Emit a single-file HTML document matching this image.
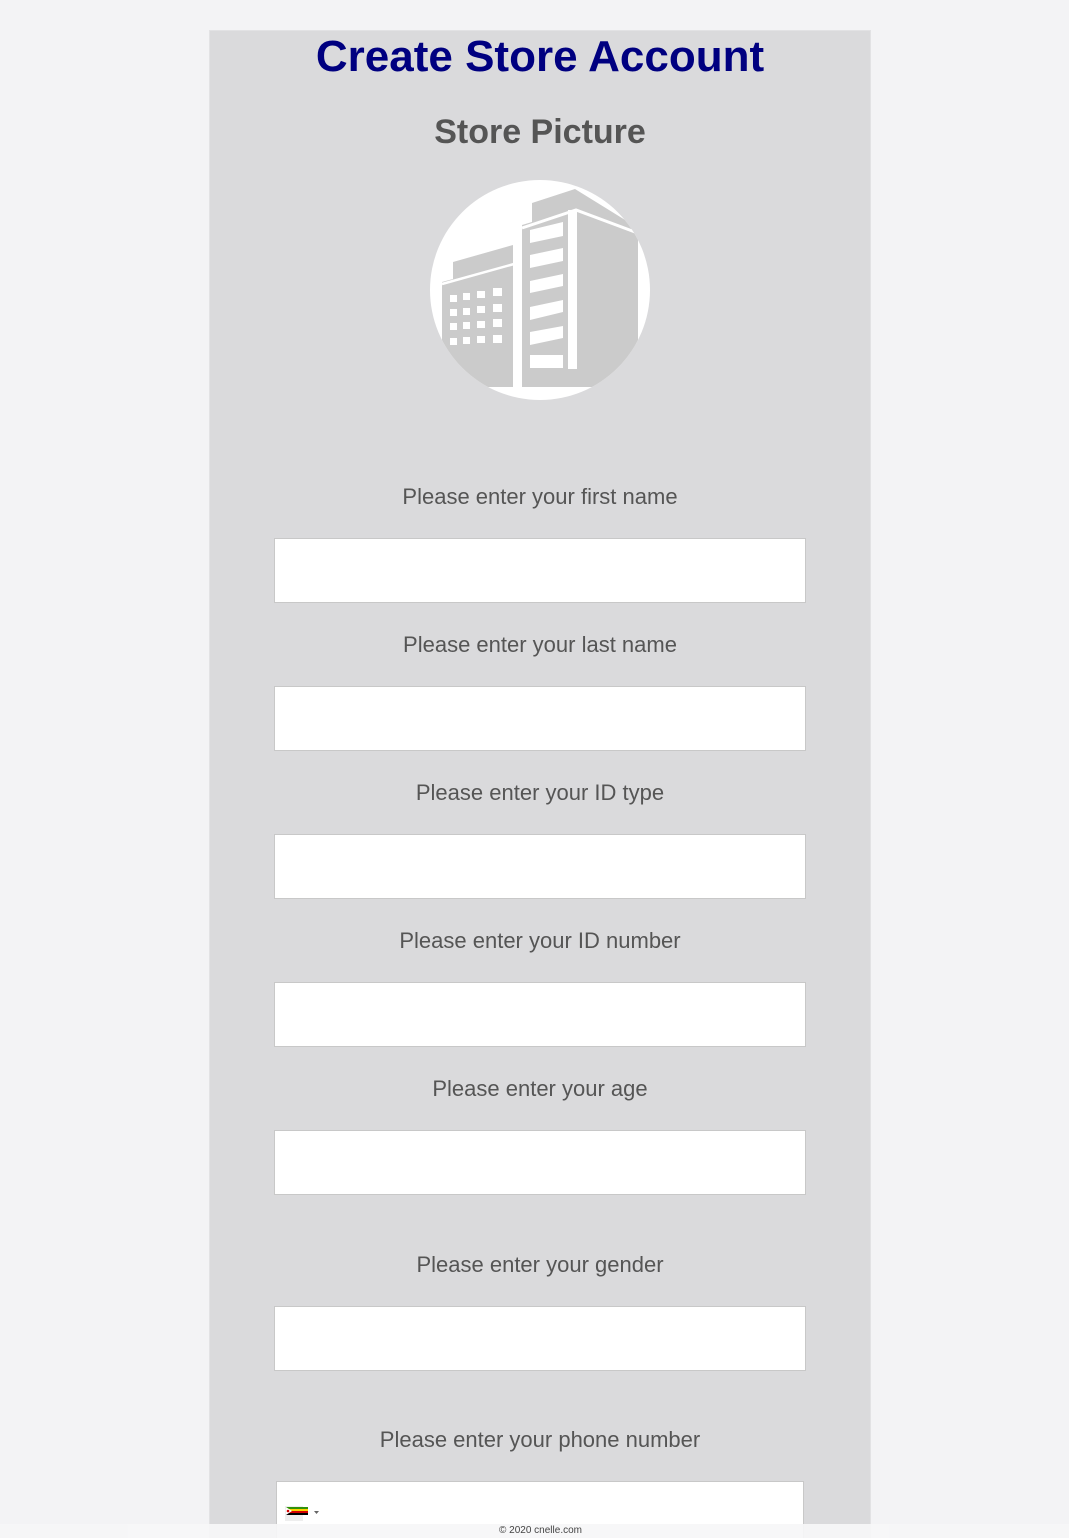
<!DOCTYPE html>
<html style="overflow:hidden;height:1538px"><head><style>
body{margin:0;background:#f3f3f5;width:1069px;height:1538px;overflow:hidden;font-family:"Liberation Sans",sans-serif;position:relative}
.panel{position:absolute;left:209px;top:30px;width:662px;height:1508px;background:#dadadc;border:1px solid #e2e2e4;border-bottom:none;box-sizing:border-box}
.t{position:absolute;left:209px;width:662px;text-align:center}
h1{margin:0;font-size:44px;color:#000080;font-weight:bold}
.lbl{font-size:22px;color:#555}
.in{position:absolute;left:274px;width:532px;height:65px;background:#fff;border:1px solid #c8c8c8;box-sizing:border-box}
.foot{position:absolute;left:0;top:1524px;width:1069px;height:14px;background:rgba(246,246,247,.93);font-size:10px;color:#444;text-align:center;line-height:13px}
.foot span{position:relative;left:6px}
</style></head><body>
<div class="panel"></div>
<div class="t" style="top:32px"><h1>Create Store Account</h1></div>
<div class="t" style="top:113px;font-size:34px;font-weight:bold;color:#555">Store Picture</div>
<svg style="position:absolute;left:430px;top:180px" width="220" height="222" viewBox="0 0 220 222">
<defs><clipPath id="c"><circle cx="110" cy="110" r="110"/></clipPath></defs>
<circle cx="110" cy="110" r="110" fill="#fff"/>
<g clip-path="url(#c)">
<polygon fill="#cbcbcb" points="12,102 23,99 23,82 83,65 83,207 12,207"/>
<polygon fill="#cbcbcb" points="92,45 102,42 102,23 145,9 200,43 208,48 208,207 92,207"/>
<polyline fill="none" stroke="#fff" stroke-width="2.5" points="12,104 84,84"/>
<polyline fill="none" stroke="#fff" stroke-width="3" points="92,48 146,30 205,52"/>
<rect x="138" y="30" width="9" height="159" fill="#fff"/>
<g fill="#fff">
<polygon points="100,50 133,42 133,56 100,63"/>
<polygon points="100,75 133,68 133,81 100,88"/>
<polygon points="100,101 133,94 133,106 100,113"/>
<polygon points="100,127 133,120 133,132 100,140"/>
<polygon points="100,152 133,146 133,158 100,165"/>
<rect x="100" y="175" width="33" height="13"/>
<rect x="20" y="115" width="7" height="7"/><rect x="33" y="113" width="7" height="7"/><rect x="47" y="111" width="8" height="7"/><rect x="63" y="108" width="9" height="8"/>
<rect x="20" y="129" width="7" height="7"/><rect x="33" y="128" width="7" height="7"/><rect x="47" y="126" width="8" height="7"/><rect x="63" y="124" width="9" height="8"/>
<rect x="20" y="143" width="7" height="7"/><rect x="33" y="142" width="7" height="7"/><rect x="47" y="141" width="8" height="7"/><rect x="63" y="139" width="9" height="8"/>
<rect x="20" y="158" width="7" height="7"/><rect x="33" y="157" width="7" height="7"/><rect x="47" y="156" width="8" height="7"/><rect x="63" y="155" width="9" height="8"/>
</g>
</g>
</svg>
<div class="t lbl" style="top:484px">Please enter your first name</div><div class="in" style="top:538px"></div>
<div class="t lbl" style="top:632px">Please enter your last name</div><div class="in" style="top:686px"></div>
<div class="t lbl" style="top:780px">Please enter your ID type</div><div class="in" style="top:834px"></div>
<div class="t lbl" style="top:928px">Please enter your ID number</div><div class="in" style="top:982px"></div>
<div class="t lbl" style="top:1076px">Please enter your age</div><div class="in" style="top:1130px"></div>
<div class="t lbl" style="top:1252px">Please enter your gender</div><div class="in" style="top:1306px"></div>
<div class="t lbl" style="top:1427px">Please enter your phone number</div>
<div class="in" style="top:1481px;left:276px;width:528px;height:57px;border-bottom:none"></div>
<svg style="position:absolute;left:285px;top:1506px" width="40" height="16">
<rect x="0" y="0" width="18" height="15" fill="#eee"/>
<rect x="1" y="1" width="22" height="2" fill="#319208"/><rect x="1" y="3" width="22" height="2" fill="#ffd200"/><rect x="1" y="5" width="22" height="2" fill="#d40000"/><rect x="1" y="7" width="22" height="2" fill="#000"/>
<polygon points="1,1 7,5 1,9" fill="#fff"/><circle cx="3" cy="5" r="1.3" fill="#d40000"/>
<polygon points="29,5 34,5 31.5,8" fill="#666"/>
</svg>
<div class="foot"><span>© 2020 cnelle.com</span></div>
</body></html>
